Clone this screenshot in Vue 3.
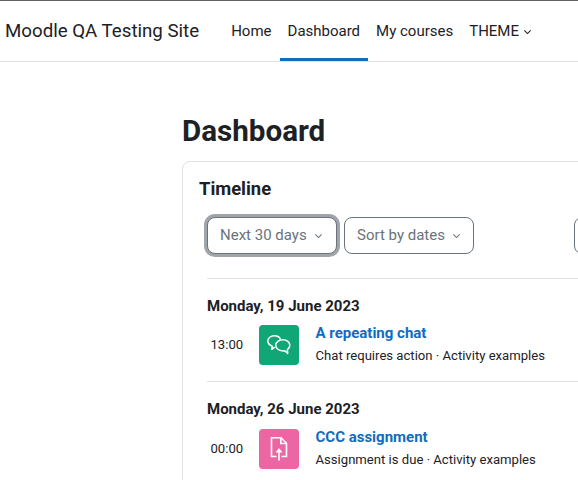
<script setup>
const groups = [
  { date: 'Monday, 19 June 2023', time: '13:00', title: 'A repeating chat', sub: 'Chat requires action · Activity examples', kind: 'chat' },
  { date: 'Monday, 26 June 2023', time: '00:00', title: 'CCC assignment', sub: 'Assignment is due · Activity examples', kind: 'assign' },
]
</script>

<template>
  <div class="page">
    <header class="nav">
      <span class="brand">Moodle QA Testing Site</span>
      <nav class="links">
        <a class="link">Home</a>
        <a class="link active">Dashboard</a>
        <a class="link">My courses</a>
        <a class="link">THEME
          <svg class="chev dark" viewBox="0 0 10 6"><path d="M1.5 1.2 5 4.7l3.5-3.5" /></svg>
        </a>
      </nav>
    </header>
    <main class="main">
      <h1 class="title">Dashboard</h1>
      <section class="card">
        <h2 class="card-title">Timeline</h2>
        <div class="filters">
          <button class="select focus"><span>Next 30 days</span>
            <svg class="chev" viewBox="0 0 10 6"><path d="M1.5 1.2 5 4.7l3.5-3.5" /></svg>
          </button>
          <button class="select"><span>Sort by dates</span>
            <svg class="chev" viewBox="0 0 10 6"><path d="M1.5 1.2 5 4.7l3.5-3.5" /></svg>
          </button>
          <div class="search"></div>
        </div>
        <div v-for="g in groups" :key="g.date" class="group">
          <h3 class="date">{{ g.date }}</h3>
          <div class="event">
            <span class="time">{{ g.time }}</span>
            <span class="icon" :class="g.kind">
              <svg v-if="g.kind === 'chat'" width="26" height="26" viewBox="0 0 26 26" fill="none" stroke="#fff" stroke-width="1.5" stroke-linejoin="round">
                <path d="M8.800 15.200l-3 2.100.4-3.200C3.600 13.100 1.800 11.200 1.800 9c0-3 2.900-5.300 6.500-5.300 3 0 5.600 1.600 6.300 3.900" />
                <path d="M17 7.700c-4.100 0-7.300 2.500-7.300 5.600s3.200 5.600 7.300 5.600c.6 0 1.200-.1 1.800-.2l2.900 2.700-.3-3.700c1.500-1.100 2.400-2.700 2.400-4.400 0-3.100-3-5.600-6.800-5.600z" />
              </svg>
              <svg v-else width="26" height="26" viewBox="0 0 26 26" fill="none" stroke="#fff" stroke-width="1.6" stroke-linejoin="miter">
                <path d="M10.500 20.500H5.500V1.800H15l5.500 5.500v13.200h-5" />
                <path d="M14.800 2v5.500h5.500" />
                <path d="M13 24.500V15.500" />
                <path d="M13 12l-3.500 4.500h7z" fill="#fff" stroke="none" />
              </svg>
            </span>
            <div class="info">
              <a class="event-title">{{ g.title }}</a>
              <p class="sub">{{ g.sub }}</p>
            </div>
          </div>
        </div>
      </section>
    </main>
  </div>
</template>

<style>
html, body { margin: 0; overflow: hidden; background: #fff; }
</style>

<style scoped>
.page {
  width: 578px;
  height: 480px;
  overflow: hidden;
  font-family: Roboto, "Liberation Sans", sans-serif;
  color: #1d2125;
  font-size: 15px;
  background: #fff;
}
.nav {
  height: 60px;
  border-top: 1px solid #5f6266;
  border-bottom: 1px solid #dee2e6;
  display: flex;
  align-items: stretch;
  padding-left: 5px;
}
.brand {
  font-size: 18.700px;
  line-height: 60px;
  margin-right: 24px;
  white-space: nowrap;
}
.links { display: flex; }
.link {
  padding: 1px 8px 0;
  line-height: 58px;
  font-size: 15px;
  white-space: nowrap;
  border-bottom: 3px solid transparent;
  height: 60px;
  box-sizing: border-box;
}
.link.active { border-bottom-color: #0f6cbf; }
.chev { width: 9px; height: 6px; fill: none; stroke: #6a737b; stroke-width: 1.2; flex: none; }
.chev.dark { stroke: #1d2125; margin-left: 0; vertical-align: 1px; }
.main { padding: 0 0 0 182px; }
.title {
  margin: 0;
  padding-top: 52px;
  font-size: 29.600px;
  line-height: 35px;
  font-weight: 700;
}
.card {
  margin-top: 12px;
  width: 500px;
  box-sizing: border-box;
  border: 1px solid #dee2e6;
  border-radius: 8px;
  padding: 16px;
}
.card-title { margin: 0; font-size: 18.400px; line-height: 22px; font-weight: 700; }
.filters { display: flex; gap: 7.500px; margin-top: 17px; padding: 0 8px; align-items: center; }
.select {
  width: 129.500px;
  height: 37px;
  box-sizing: border-box;
  background: #fff;
  border: 1px solid #6a737b;
  border-radius: 8px;
  color: #6a737b;
  font: inherit;
  font-size: 15px;
  padding: 0 0 2px 12px;
  white-space: nowrap;
  display: flex;
  align-items: center;
  gap: 7px;
}
.select .chev { margin-top: 2px; }
.select.focus { box-shadow: 0 0 0 3px #a0a5ab; }
.search { width: 60px; height: 37px; box-sizing: border-box; border: 1px solid #6a737b; border-radius: 8px; margin-left: 93px; flex: none; }
.group { margin: 24px 0 0 8px; border-top: 1px solid #dee2e6; padding-top: 17px; height: 85px; }
.group + .group { margin-top: 0; height: 100px; }
.date { margin: 0; font-size: 15px; line-height: 20px; font-weight: 700; }
.event { display: flex; align-items: center; margin-top: 7px; }
.group + .group .event { margin-top: 8px; }
.time { width: 52px; padding: 0 0 2px 3.500px; box-sizing: border-box; font-size: 13.125px; }
.icon {
  width: 40px;
  height: 40px;
  border-radius: 4px;
  display: flex;
  align-items: center;
  justify-content: center;
}
.icon.chat { background: #11a676; }
.icon.assign { background: #eb66a2; }
.info { margin-left: 16.500px; padding-bottom: 1px; }
.event-title { display: block; color: #0f6cbf; font-weight: 700; font-size: 15px; line-height: 20px; }
.sub { margin: 3px 0 0; font-size: 13.125px; line-height: 20px; white-space: nowrap; }
</style>
